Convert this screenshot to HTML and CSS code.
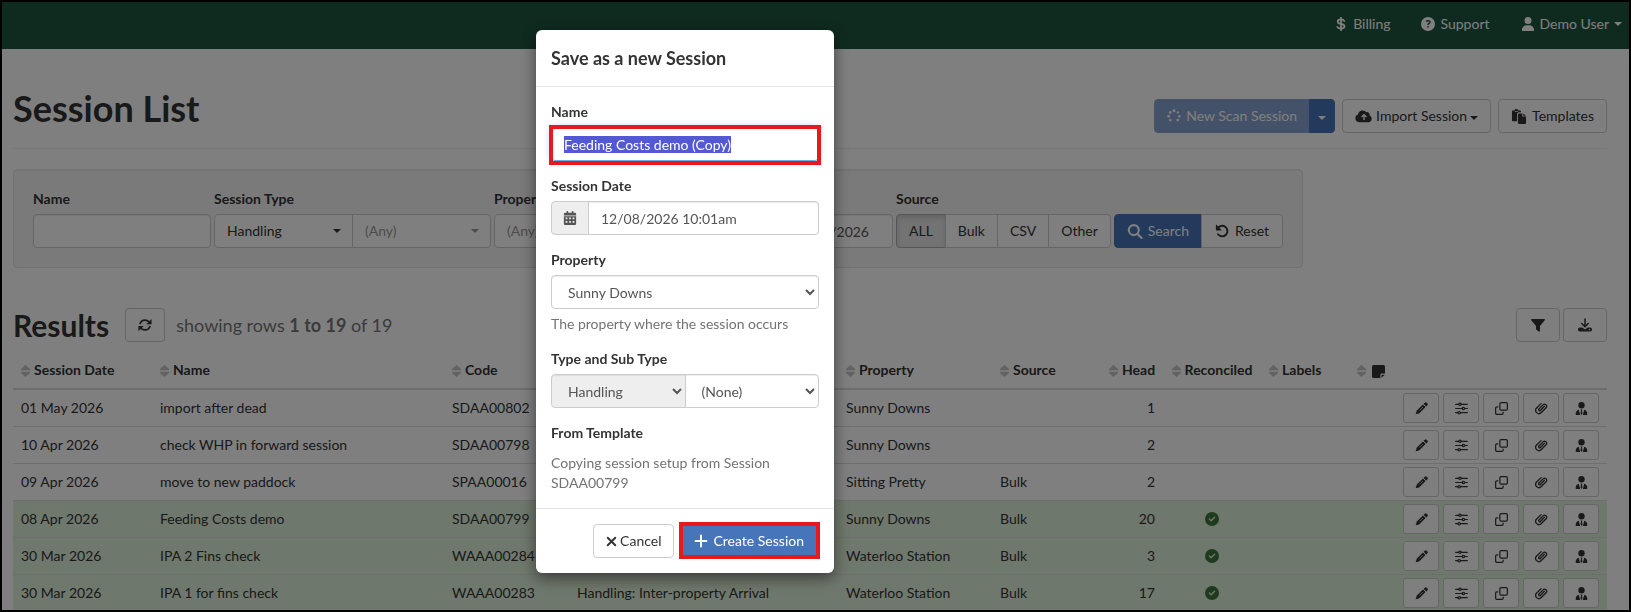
FILE: index.html
```html
<!DOCTYPE html>
<html lang="en">
<head>
    <meta charset="UTF-8">
    <title>Session List</title>
    <link rel="stylesheet" href="styles.css">
</head>
<body>
<svg class="sprite" aria-hidden="true">
    <symbol id="i-dollar" viewBox="0 0 16 16"><path d="M8 .8v14.4M11.8 4.6C11.2 3.300 9.800 2.800 8 2.800c-2.200 0-3.800.9-3.800 2.500 0 3.700 7.800 1.500 7.800 5.300 0 1.700-1.700 2.600-4 2.600-2 0-3.500-.6-4.200-2" fill="none" stroke="currentColor" stroke-width="2" stroke-linecap="round"/></symbol>
    <symbol id="i-help" viewBox="0 0 16 16"><path fill="currentColor" fill-rule="evenodd" d="M8 0a8 8 0 1 1 0 16A8 8 0 0 1 8 0zM5.300 5.200l1.400.5c.2-.5.5-.7 1-.7h.8c.6 0 1 .4 1 .9 0 .4-.2.6-.5.8L7.300 7.600v1.600h1.500v-.7l1-.6c.8-.5 1.200-1.200 1.200-2 0-1.400-1.100-2.400-2.500-2.400h-.8c-1.100 0-2 .6-2.400 1.700zM8 10.200a1 1 0 1 0 0 2 1 1 0 0 0 0-2z"/></symbol>
    <symbol id="i-user" viewBox="0 0 448 512"><path fill="currentColor" d="M224 256A128 128 0 1 0 224 0a128 128 0 1 0 0 256zm-45.700 48C79.800 304 0 383.800 0 482.300C0 498.700 13.300 512 29.700 512H418.300c16.400 0 29.700-13.300 29.700-29.700C448 383.800 368.200 304 269.700 304H178.300z"/></symbol>
    <symbol id="i-spinner" viewBox="0 0 16 16"><g fill="currentColor"><circle cx="8" cy="2" r="1.700"/><circle cx="12.300" cy="3.900" r="1.300"/><circle cx="14.200" cy="8.200" r="1.400"/><circle cx="12.300" cy="12.700" r="1.600"/><circle cx="3.700" cy="12.700" r="1.500"/><circle cx="1.800" cy="8.200" r="1.500"/><circle cx="3.700" cy="3.900" r="1.500"/></g></symbol>
    <symbol id="i-cloud" viewBox="0 0 20 16"><path fill="currentColor" fill-rule="evenodd" d="M4.500 15A4.500 4.500 0 0 1 3 6.300 5.600 5.600 0 0 1 12.800 3.600a3.200 3.200 0 0 1 3.600 3.900A4 4 0 0 1 16 15zM10 5.300L6.600 8.700l1.100 1.100 1.500-1.500V12.500h1.600V8.300l1.500 1.500 1.100-1.100z"/></symbol>
    <symbol id="i-paste" viewBox="0 0 16 16"><path fill="currentColor" fill-rule="evenodd" d="M1.500 1.500h1.700C3.500.6 4.300 0 5.300 0s1.800.6 2.100 1.500h1.700c.6 0 1 .4 1 1V3.500H8a2 2 0 0 0-2 2V13H1.500a1 1 0 0 1-1-1V2.500a1 1 0 0 1 1-1zm2 .8v.9h3.600v-.9zM8 4.800h3.500V8H15.500v7a1 1 0 0 1-1 1H8a1 1 0 0 1-1-1V5.800a1 1 0 0 1 1-1zm4.500 0l3 2.400h-3z"/></symbol>
    <symbol id="i-search" viewBox="0 0 16 16"><path d="M10.700 10.700L15 15M12 6.500a5.300 5.300 0 1 1-10.600 0 5.300 5.300 0 0 1 10.600 0z" fill="none" stroke="currentColor" stroke-width="2.300" stroke-linecap="round"/></symbol>
    <symbol id="i-undo" viewBox="0 0 16 16"><path d="M2.800 5.500a6 6 0 1 1 .6 6.200" fill="none" stroke="currentColor" stroke-width="2.200" stroke-linecap="round"/><path fill="currentColor" d="M1 1.500v5c0 .5.300.8.8.8h5c.5 0 .7-.5.4-.8L2 1.200c-.4-.4-1-.2-1 .3z"/></symbol>
    <symbol id="i-refresh" viewBox="0 0 16 16"><path d="M2.300 7C2.900 4 5.200 2.300 8 2.300c2 0 3.500.8 4.900 2.300M13.700 9c-.6 3-2.900 4.700-5.700 4.700-2 0-3.500-.8-4.900-2.300" fill="none" stroke="currentColor" stroke-width="2"/><path fill="currentColor" d="M15.500 1v6h-6zM.5 15V9h6z"/></symbol>
    <symbol id="i-filter" viewBox="0 0 16 16"><path fill="currentColor" d="M1 1h14c.9 0 1.300 1 .7 1.700L10.300 9v5.800c0 .8-.9 1.200-1.500.7l-2.600-2c-.3-.2-.5-.6-.5-1V9L.3 2.700C-.3 2 .1 1 1 1z"/></symbol>
    <symbol id="i-download" viewBox="0 0 16 16"><path d="M8 1v8.500M4.300 6.300L8 10l3.700-3.700" fill="none" stroke="currentColor" stroke-width="1.700" stroke-linecap="round" stroke-linejoin="round"/><path fill="currentColor" fill-rule="evenodd" d="M2 10.800h2.800L8 13l3.200-2.200H14a2 2 0 0 1 2 2v.7a2 2 0 0 1-2 2H2a2 2 0 0 1-2-2v-.7a2 2 0 0 1 2-2zm11 1.600a.8.800 0 1 0 0 1.600.8.800 0 0 0 0-1.600z"/></symbol>
    <symbol id="i-sort" viewBox="0 0 9 12"><path fill="currentColor" d="M4.500 0L9 4v1.300H0V4zM4.500 12L0 8V6.700h9V8z"/></symbol>
    <symbol id="i-note" viewBox="0 0 16 16"><path fill="currentColor" d="M2 0h12a2 2 0 0 1 2 2v8.500h-4a1.700 1.700 0 0 0-1.700 1.700V16H2a2 2 0 0 1-2-2V2a2 2 0 0 1 2-2zM11.700 15.800v-3.300c0-.3.200-.5.5-.5h3.500z"/></symbol>
    <symbol id="i-pencil" viewBox="0 0 16 16"><path fill="currentColor" d="M12.100.8a1.600 1.600 0 0 1 2.300 0l.9.9a1.600 1.600 0 0 1 0 2.300l-1.500 1.500-3.200-3.200zM9.800 3l3.200 3.200-7.300 7.300a2 2 0 0 1-.9.5L.8 15.200l1.200-4a2 2 0 0 1 .5-.9z"/><path d="M9.700 6.200L5.500 10.400" stroke="#fff" stroke-width=".8"/></symbol>
    <symbol id="i-sliders" viewBox="0 0 16 16"><g fill="none" stroke="currentColor" stroke-width="1.500" stroke-linecap="round"><path d="M.8 2.800h3.600M7.800 2.800h7.400M.8 8h7.800M12 8h3.200M.8 13.200h2.600M6.800 13.200h8.400"/><circle cx="6.100" cy="2.800" r="1.500"/><circle cx="10.300" cy="8" r="1.500"/><circle cx="5.100" cy="13.200" r="1.500"/></g></symbol>
    <symbol id="i-copy" viewBox="0 0 16 16"><g fill="none" stroke="currentColor" stroke-width="1.500"><rect x="6" y=".8" width="9.200" height="9.200" rx="1.500"/><path d="M4 6H2.300A1.500 1.500 0 0 0 .8 7.500v6.200a1.500 1.500 0 0 0 1.500 1.500h6.200a1.500 1.500 0 0 0 1.500-1.500V12"/></g></symbol>
    <symbol id="i-clip" viewBox="0 0 16 16"><path d="M11.500 5.300L6.700 10.400a1.200 1.200 0 0 1-1.800-1.700l5-5.200a2.500 2.500 0 0 1 3.700 3.500l-5.800 6a4 4 0 0 1-5.800-5.600L7.500 2" fill="none" stroke="currentColor" stroke-width="1.600" stroke-linecap="round"/></symbol>
    <symbol id="i-tie" viewBox="0 0 16 16"><circle cx="8" cy="4" r="3.900" fill="currentColor"/><path fill="currentColor" d="M4.600 9.600L6.400 16H1.800a1 1 0 0 1-1-1c0-2.700 1.500-4.900 3.800-5.400zM11.400 9.600c2.300.5 3.800 2.700 3.800 5.400a1 1 0 0 1-1 1H9.600zM6.800 9.200h2.400l-.6 1.700.6 3.200L8 16l-1.200-1.900.6-3.200z"/></symbol>
    <symbol id="i-check" viewBox="0 0 512 512"><path fill="currentColor" d="M256 512A256 256 0 1 0 256 0a256 256 0 1 0 0 512zM369 209L241 337c-9.400 9.400-24.600 9.400-33.900 0l-64-64c-9.400-9.400-9.400-24.600 0-33.900s24.600-9.400 33.900 0l47 47L335 175c9.400-9.400 24.600-9.400 33.900 0s9.400 24.600 0 33.900z"/></symbol>
    <symbol id="i-calendar" viewBox="0 0 14 16"><path fill="currentColor" fill-rule="evenodd" d="M3 1a1 1 0 0 1 2 0v1h4V1a1 1 0 0 1 2 0v1h1.500A1.500 1.500 0 0 1 14 3.500V5H0V3.500A1.500 1.500 0 0 1 1.500 2H3zM0 6h14v8.500a1.500 1.500 0 0 1-1.500 1.500h-11A1.500 1.500 0 0 1 0 14.500zm2 1.500v2h2v-2zm4 0v2h2v-2zm4 0v2h2v-2zm-8 4v2h2v-2zm4 0v2h2v-2zm4 0v2h2v-2z"/></symbol>
    <symbol id="i-times" viewBox="0 0 16 16"><path d="M2.500 2.500l11 11M13.500 2.500l-11 11" stroke="currentColor" stroke-width="2.800" stroke-linecap="round"/></symbol>
    <symbol id="i-plus" viewBox="0 0 16 16"><path d="M8 1.800v12.400M1.800 8h12.400" stroke="currentColor" stroke-width="2.300" stroke-linecap="round"/></symbol>
</svg>

<nav class="navbar">
    <a href="#"><svg class="icon"><use href="#i-dollar"/></svg> Billing</a>
    <a href="#"><svg class="icon"><use href="#i-help"/></svg> Support</a>
    <a href="#" class="user"><svg class="icon"><use href="#i-user"/></svg> Demo User<span class="caret"></span></a>
</nav>

<main class="page">
    <header class="page-header">
        <h1>Session List</h1>
        <div class="toolbar">
            <div class="btn-group">
                <button type="button" class="btn btn-primary" disabled><svg class="icon"><use href="#i-spinner"/></svg>New Scan Session</button>
                <button type="button" class="btn btn-primary btn-caret" aria-label="More"><span class="caret"></span></button>
            </div>
            <button type="button" class="btn btn-tight"><svg class="icon icon-wide"><use href="#i-cloud"/></svg>Import Session<span class="caret"></span></button>
            <button type="button" class="btn"><svg class="icon icon-lg"><use href="#i-paste"/></svg>Templates</button>
        </div>
    </header>

    <form class="well">
        <div class="field field-name">
            <label for="f_name">Name</label>
            <input type="text" class="control" id="f_name">
        </div>
        <div class="field field-type">
            <label for="f_type">Session Type</label>
            <div class="pair">
                <span class="pick"><select class="control" id="f_type"><option>Handling</option></select></span>
                <span class="pick muted"><select class="control" aria-label="Sub Type"><option>(Any)</option></select></span>
            </div>
        </div>
        <div class="field field-property">
            <label for="f_property">Property</label>
            <span class="pick muted"><select class="control" id="f_property"><option>(Any)</option></select></span>
        </div>
        <div class="field field-date">
            <label for="f_date">Date</label>
            <input type="text" class="control" id="f_date" value="12/08/2026">
        </div>
        <div class="field">
            <span class="label">Source</span>
            <div class="btn-group">
                <button type="button" class="btn active">ALL</button>
                <button type="button" class="btn">Bulk</button>
                <button type="button" class="btn">CSV</button>
                <button type="button" class="btn">Other</button>
            </div>
        </div>
        <div class="btn-group">
            <button type="button" class="btn btn-primary"><svg class="icon icon-lg"><use href="#i-search"/></svg>Search</button>
            <button type="reset" class="btn btn-reset"><svg class="icon"><use href="#i-undo"/></svg>Reset</button>
        </div>
    </form>

    <div class="results">
        <h2>Results</h2>
        <button type="button" class="btn" aria-label="Refresh"><svg class="icon"><use href="#i-refresh"/></svg></button>
        <p>showing rows <strong>1 to 19</strong> of 19</p>
        <div class="results-tools">
            <button type="button" class="btn btn-icon" aria-label="Filter"><svg class="icon"><use href="#i-filter"/></svg></button>
            <button type="button" class="btn btn-icon" aria-label="Download"><svg class="icon"><use href="#i-download"/></svg></button>
        </div>
    </div>

    <table class="table">
        <colgroup>
            <col class="c-date"><col><col class="c-code"><col class="c-type"><col class="c-property"><col class="c-source">
            <col class="c-head"><col class="c-rec"><col class="c-labels"><col class="c-note"><col class="c-actions">
        </colgroup>
        <thead>
        <tr>
            <th><svg class="sort"><use href="#i-sort"/></svg>Session Date</th>
            <th><svg class="sort"><use href="#i-sort"/></svg>Name</th>
            <th><svg class="sort"><use href="#i-sort"/></svg>Code</th>
            <th aria-label="Type"><svg class="sort"><use href="#i-sort"/></svg></th>
            <th><svg class="sort"><use href="#i-sort"/></svg>Property</th>
            <th><svg class="sort"><use href="#i-sort"/></svg>Source</th>
            <th class="num"><svg class="sort"><use href="#i-sort"/></svg>Head</th>
            <th class="mid"><svg class="sort"><use href="#i-sort"/></svg>Reconciled</th>
            <th><svg class="sort"><use href="#i-sort"/></svg>Labels</th>
            <th aria-label="Note"><svg class="sort"><use href="#i-sort"/></svg><svg class="icon icon-sm"><use href="#i-note"/></svg></th>
            <th></th>
        </tr>
        </thead>
        <tbody id="rows"></tbody>
    </table>
</main>

<div class="backdrop"></div>

<div class="modal-wrap">
    <form class="modal" role="dialog" aria-labelledby="modal_title">
        <div class="modal-header"><h4 id="modal_title">Save as a new Session</h4></div>
        <div class="modal-body">
            <div class="group">
                <label for="m_name">Name</label>
                <div class="mark mark-input"><input type="text" class="control" id="m_name" value="Feeding Costs demo (Copy)" autofocus></div>
            </div>
            <div class="group">
                <label for="m_date">Session Date</label>
                <div class="pair">
                    <span class="addon"><svg class="icon"><use href="#i-calendar"/></svg></span>
                    <input type="text" class="control" id="m_date" value="12/08/2026 10:01am">
                </div>
            </div>
            <div class="group">
                <label for="m_property">Property</label>
                <select class="control" id="m_property"><option>Sunny Downs</option></select>
                <p class="help">The property where the session occurs</p>
            </div>
            <div class="group">
                <label for="m_type">Type and Sub Type</label>
                <div class="pair">
                    <select class="control" id="m_type" disabled><option>Handling</option></select>
                    <select class="control" aria-label="Sub Type"><option>(None)</option></select>
                </div>
            </div>
            <div class="group">
                <span class="label">From Template</span>
                <p class="help help-static">Copying session setup from Session SDAA00799</p>
            </div>
        </div>
        <div class="modal-footer">
            <button type="button" class="btn btn-tight"><svg class="icon icon-xs"><use href="#i-times"/></svg>Cancel</button>
            <div class="mark mark-btn"><button type="button" class="btn btn-primary btn-create"><svg class="icon"><use href="#i-plus"/></svg>Create Session</button></div>
        </div>
    </form>
</div>

<script>
    var sessions = [
        ['01 May 2026', 'import after dead', 'SDAA00802', '', 'Sunny Downs', '', 1, false],
        ['10 Apr 2026', 'check WHP in forward session', 'SDAA00798', '', 'Sunny Downs', '', 2, false],
        ['09 Apr 2026', 'move to new paddock', 'SPAA00016', '', 'Sitting Pretty', 'Bulk', 2, false],
        ['08 Apr 2026', 'Feeding Costs demo', 'SDAA00799', '', 'Sunny Downs', 'Bulk', 20, true],
        ['30 Mar 2026', 'IPA 2 Fins check', 'WAAA00284', '', 'Waterloo Station', 'Bulk', 3, true],
        ['30 Mar 2026', 'IPA 1 for fins check', 'WAAA00283', 'Handling: Inter-property Arrival', 'Waterloo Station', 'Bulk', 17, true]
    ];
    var actions = [['pencil', 'Edit'], ['sliders', 'Settings'], ['copy', 'Copy'], ['clip', 'Attachments'], ['tie', 'Owner']];

    function icon(name, cls) {
        return '<svg class="' + cls + '"><use href="#i-' + name + '"/></svg>';
    }

    var buttons = actions.map(function (a) {
        return '<button type="button" class="btn btn-sm" aria-label="' + a[1] + '">' + icon(a[0], 'icon icon-sm') + '</button>';
    }).join('');

    document.getElementById('rows').innerHTML = sessions.map(function (s) {
        return '<tr' + (s[7] ? ' class="success"' : '') + '>' +
            '<td>' + s.slice(0, 6).join('</td><td>') + '</td>' +
            '<td class="num">' + s[6] + '</td>' +
            '<td class="mid">' + (s[7] ? icon('check', 'icon ok') : '') + '</td>' +
            '<td></td><td></td>' +
            '<td><div class="actions">' + buttons + '</div></td></tr>';
    }).join('');

    var nameBox = document.getElementById('m_name');
    nameBox.focus();
    nameBox.select();
</script>
</body>
</html>
```
FILE: styles.css
```css
*{box-sizing:border-box;}
body{
    margin:0;
    height:100vh;
    padding:2px;
    overflow:hidden;
    background:#fff;
    color:#333;
    font:14px/20px Lato,"Liberation Sans",sans-serif;
}
/* thin black frame round the whole window */
body:after{
    content:"";
    position:fixed;
    inset:0;
    border:2px solid #000;
    pointer-events:none;
    z-index:30;
}
h1,h2,h4,p{margin:0;}
h1,h2,h4{font-weight:700;}
label,.label{display:block;margin-bottom:5px;font-weight:700;}
button,input,select{font:inherit;color:inherit;margin:0;}
.sprite{position:absolute;width:0;height:0;}
.icon{width:14px;height:14px;flex:none;}
.icon-lg{width:16px;height:15px;}
.icon-wide{width:18px;}
.icon-sm{width:13px;height:13px;}
.icon-xs{width:11px;height:11px;}
.caret{
    display:inline-block;
    border:4px solid transparent;
    border-top-color:currentColor;
    border-bottom:0;
}

.navbar{
    display:flex;
    justify-content:flex-end;
    align-items:center;
    gap:31px;
    height:47px;
    padding:0 7px 4px 0;
    background:#1e5640;
}
.navbar a{display:flex;align-items:center;gap:5px;color:#fff;text-decoration:none;}

.page{padding:0 22px 0 11px;}
.page-header{
    display:flex;
    justify-content:space-between;
    align-items:flex-end;
    padding:39px 0 15px;
    border-bottom:1px solid #eee;
    margin-bottom:20px;
}
h1{font-size:36px;line-height:40px;margin-bottom:5px;}
.toolbar{display:flex;gap:7px;}
.toolbar .caret{margin-top:3px;}

.btn{
    display:flex;
    align-items:center;
    justify-content:center;
    gap:5px;
    height:34px;
    padding:0 12px;
    border:1px solid #ccc;
    border-radius:4px;
    background:#fff;
    color:#333;
    white-space:nowrap;
}
.btn-tight{gap:3px;}
.btn-primary{background:#4775b9;border-color:#4775b9;color:#fff;}
.btn-primary:disabled{opacity:.65;}
.btn-caret{padding:0 8px;}
.btn-icon{padding:0 14px;}
.btn-sm{width:36px;height:30px;padding:0;border-radius:3px;}
.btn.active{background:#e6e6e6;border-color:#adadad;box-shadow:inset 0 3px 5px rgba(0,0,0,.125);}
.btn-group{display:flex;}
.btn-group .btn + .btn{margin-left:-1px;border-top-left-radius:0;border-bottom-left-radius:0;}
.btn-group .btn:not(:last-child){border-top-right-radius:0;border-bottom-right-radius:0;}
.btn-group .btn-reset{gap:6px;padding:0 13px;}

.control{
    display:block;
    width:100%;
    height:34px;
    padding:6px 12px;
    border:1px solid #ccc;
    border-radius:4px;
    background:#fff;
    color:#555;
    box-shadow:inset 0 1px 1px rgba(0,0,0,.075);
}
.control:disabled{background:#eee;opacity:1;}
.pair{display:flex;}
.pair > * + *,.pair > * + * .control{border-top-left-radius:0;border-bottom-left-radius:0;}
.pair > * + *{margin-left:-1px;}
.pair > :first-child,.pair > :first-child .control{border-top-right-radius:0;border-bottom-right-radius:0;}

.well{
    display:flex;
    align-items:flex-end;
    gap:3px;
    width:fit-content;
    padding:19px;
    border:1px solid #e3e3e3;
    border-radius:4px;
    background:#f5f5f5;
    box-shadow:inset 0 1px 1px rgba(0,0,0,.05);
}
.field-name{width:178px;}
.field-type{width:277px;}
.field-property{width:200px;}
.field-date{width:196px;}
.field-date .control{text-align:right;padding-right:23px;}
.pick{position:relative;display:block;flex:1;}
.pick .control{appearance:none;color:#333;box-shadow:none;}
.pick:after{
    content:"";
    position:absolute;
    right:12px;
    top:15px;
    border:4px solid transparent;
    border-top-color:#333;
    border-bottom:0;
}
.pick.muted .control{color:#999;}
.pick.muted:after{border-top-color:#999;}

.results{display:flex;align-items:center;margin-top:40px;}
.results h2{font-size:30px;line-height:34px;margin-right:16px;}
.results p{margin-left:11px;font-size:18px;color:#777;}
.results-tools{display:flex;gap:3px;margin-left:auto;}

.table{width:100%;margin-top:10px;table-layout:fixed;border-collapse:separate;border-spacing:0;}
.c-date{width:139px;}
.c-code{width:125px;}
.c-type{width:269px;}
.c-property{width:154px;}
.c-source{width:109px;}
.c-head{width:62px;}
.c-rec{width:98px;}
.c-labels{width:88px;}
.c-note{width:46px;}
.c-actions{width:212px;}
.table th{padding:8px;border-bottom:2px solid #ddd;text-align:left;font-weight:700;white-space:nowrap;}
.table td{padding:3px 8px;white-space:nowrap;}
.table tr + tr td{border-top:1px solid #ddd;}
.table .num{text-align:right;}
.table .mid{text-align:center;}
.table th .icon,.sort{vertical-align:middle;}
.table th .icon{margin-left:2px;}
.sort{width:9px;height:12px;margin-right:4px;color:#c4c4c4;}
.success td{background:#dff0d8;}
.ok{display:block;margin:auto;color:#3c763d;}
.actions{display:flex;gap:4px;}

.backdrop{position:fixed;inset:0;background:rgba(0,0,0,.5);z-index:10;}
.modal-wrap{position:fixed;inset:0;padding:30px 261px 0 0;z-index:20;}
.modal{
    width:298px;
    margin:0 auto;
    border-radius:6px;
    background:#fff;
    box-shadow:0 5px 15px rgba(0,0,0,.5);
}
.modal-header{padding:15px;border-bottom:1px solid #e5e5e5;}
.modal-header h4{font-size:18px;line-height:26px;}
.modal-body{padding:15px;}
.group + .group{margin-top:15px;}
.help{margin-top:5px;color:#737373;}
.help-static{margin-top:10px;}
.addon{
    display:flex;
    align-items:center;
    justify-content:center;
    flex:none;
    width:38px;
    border:1px solid #ccc;
    border-radius:4px;
    background:#eee;
    color:#555;
}
.modal-footer{display:flex;justify-content:flex-end;gap:5px;padding:15px;border-top:1px solid #e5e5e5;}
.btn-create{gap:5px;padding:0 14px;}

/* red boxes round the field and the button that matter */
.mark{position:relative;}
.mark:after{content:"";position:absolute;border:4px solid #e8191c;pointer-events:none;}
.mark-input:after{inset:-2px -2px -4px;}
.mark-btn:after{inset:-2px -1px -1px 0;}
.mark-input .control:focus{
    outline:0;
    border-color:#66afe9;
    box-shadow:inset 0 1px 1px rgba(0,0,0,.075),0 0 8px rgba(102,175,233,.6);
}
.control::selection{background:#5358d5;color:#fff;}
```
